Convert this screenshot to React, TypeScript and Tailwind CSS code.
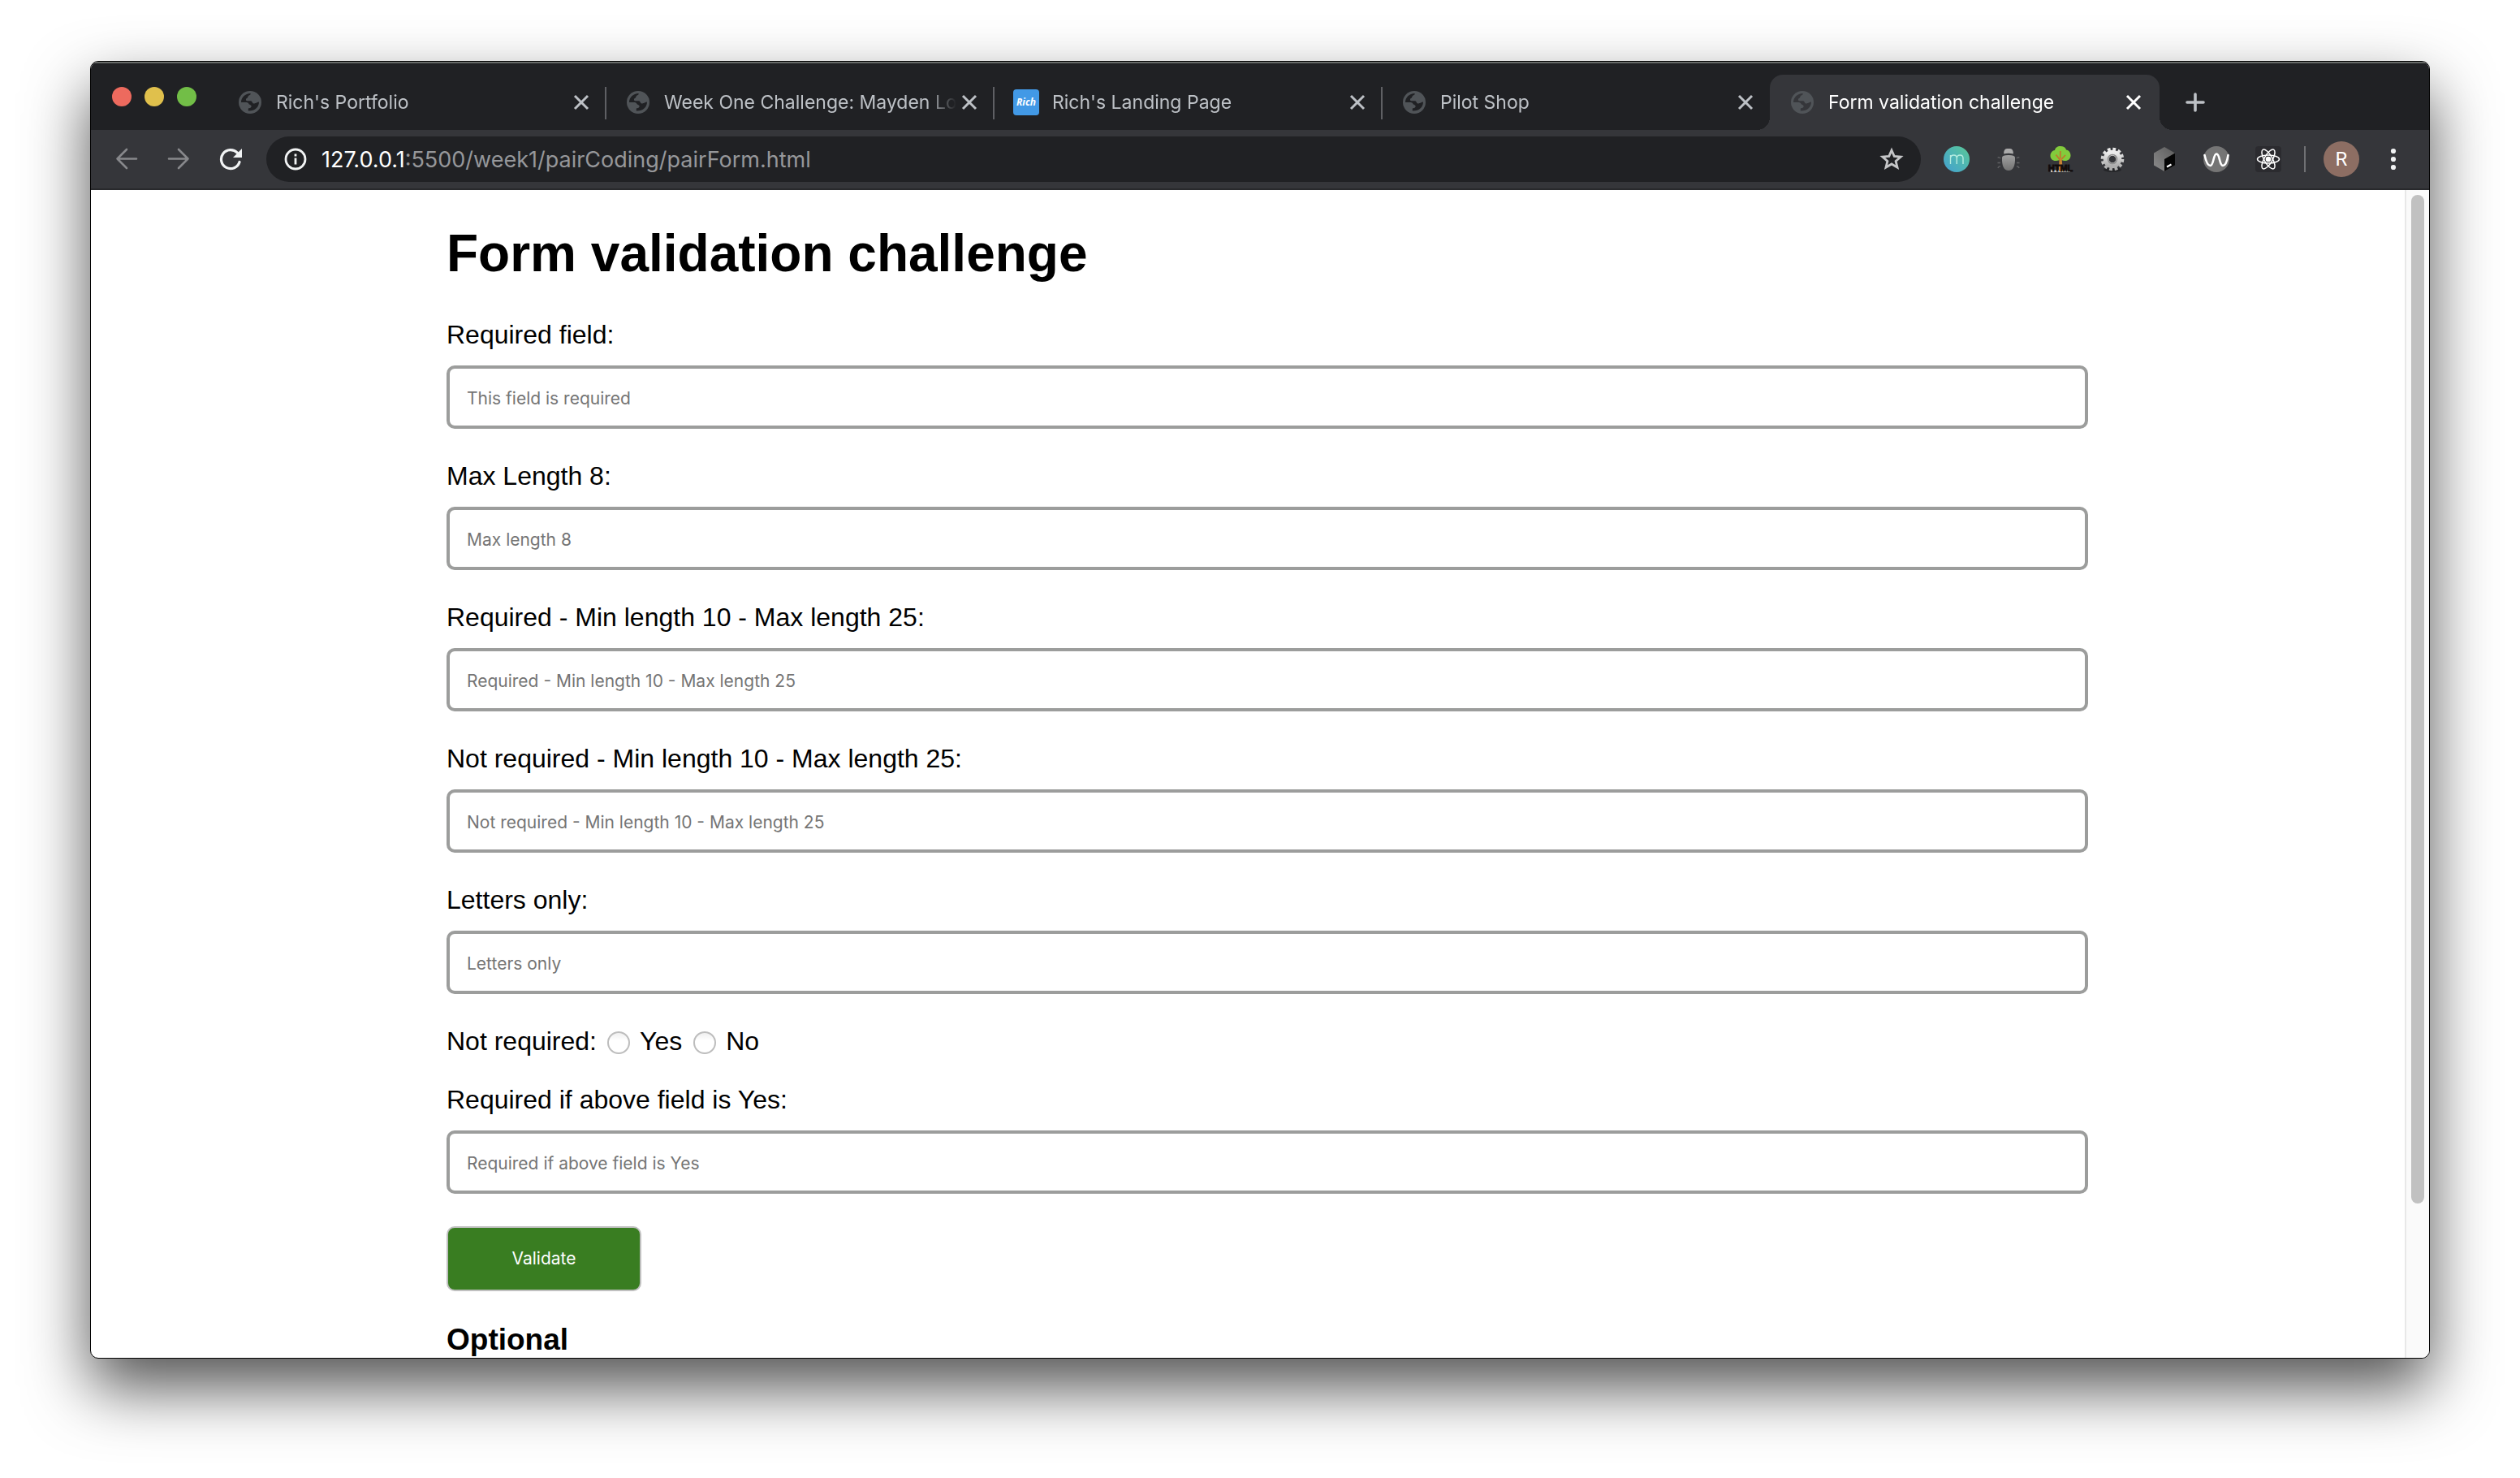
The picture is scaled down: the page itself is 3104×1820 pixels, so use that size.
import React from "react";

function GlobeIcon() {
  return (
    <svg viewBox="0 0 28 28" className="size-7 shrink-0" aria-hidden="true">
      <circle cx="14" cy="14" r="14" fill="#505458" />
      <path
        className="fill-[var(--tab)]"
        d="M3 14C3 8 8 3 14.6 3C14.8 4.400 14.400 5 12.600 5.400C11.400 5.800 11.400 8.800 10 9C8.600 9.200 8.600 12 10 12.200H14.600C16.800 12.200 16.400 14.800 18.400 15.400C21 16 22.600 13.600 25 13.600C25 20 20 25 11.800 24.600V22C12 20.800 15.600 21.600 15.600 18.800C15.600 16.800 13.400 17.400 12.200 15.400C11.200 14 10 14 8.600 14Z"
      />
    </svg>
  );
}

function CloseIcon() {
  return (
    <svg viewBox="0 0 20 20" className="size-5" fill="none" stroke="currentColor" strokeWidth="3" aria-hidden="true">
      <path d="M2 2L18 18M18 2L2 18" />
    </svg>
  );
}

function Tab({ title, active, rich, divider }: { title: string; active?: boolean; rich?: boolean; divider?: boolean }) {
  return (
    <div
      className={
        active
          ? "relative flex h-[68px] w-[480px] min-w-0 items-center rounded-t-2xl bg-[#35363a] pl-[26px] pr-5 text-white [--tab:#35363a]"
          : "relative flex h-[68px] w-[478px] min-w-0 items-center pl-[26px] pr-[18px] text-[#bdc1c6] [--tab:#202124]"
      }
    >
      {active && (
        <>
          <span className="absolute bottom-0 -left-4 size-4 bg-[radial-gradient(circle_at_0_0,#202124_16px,#35363a_16px)]" />
          <span className="absolute bottom-0 -right-4 size-4 bg-[radial-gradient(circle_at_100%_0,#202124_16px,#35363a_16px)]" />
        </>
      )}
      {rich ? (
        <span className="-mx-0.5 flex size-8 shrink-0 items-center justify-center rounded-sm bg-[#4299e6] font-['Open_Sans',sans-serif] text-[12px] font-bold italic text-white">
          Rich
        </span>
      ) : (
        <GlobeIcon />
      )}
      <span className="ml-[18px] min-w-0 flex-1 overflow-hidden whitespace-nowrap text-[23px] leading-8 [mask-image:linear-gradient(to_right,black_calc(100%-36px),transparent)]">
        {title}
      </span>
      <button aria-label={`Close ${title}`} className="ml-1 flex size-6 shrink-0 items-center justify-center">
        <CloseIcon />
      </button>
      {divider && <span className="absolute top-[15px] -right-px h-10 w-0.5 bg-[#5f6064]" />}
    </div>
  );
}

function Extensions() {
  return (
    <div className="ml-7 flex items-center gap-8">
      <button aria-label="m" className="flex size-8 items-center justify-center rounded-full bg-linear-to-tr from-[#459fd0] to-[#5bc895]">
        <svg viewBox="0 0 32 32" className="size-8" fill="none" stroke="#b5ece0" strokeWidth="1.4">
          <path d="M8.5 22V11M8.5 14.5Q9 11 12.5 11Q16.300 11 16.300 15V22M16.300 15Q16.300 11 20.300 11Q24 11 24 15V22" />
        </svg>
      </button>
      <button aria-label="Bug" className="size-8">
        <svg viewBox="0 0 32 32" className="size-8">
          <defs>
            <linearGradient id="bug" x1="0" y1="0" x2="0" y2="1">
              <stop offset="0" stopColor="#a0a0a0" />
              <stop offset="1" stopColor="#737373" />
            </linearGradient>
          </defs>
          <path d="M10.200 9.500Q10 3 14 3H18Q22 3 21.800 9.500Q16 8 10.200 9.500Z" fill="#ababab" />
          <path d="M8 14Q8 11 16 11Q24 11 24 14Q24.500 29.800 16 30Q7.500 29.800 8 14Z" fill="url(#bug)" />
          <g fill="none" stroke="#606164" strokeWidth="1.4">
            <path d="M6 15Q3.500 12.500 3 14.500M26 15Q28.500 12.500 29 14.500M6 20.500H2.500M26 20.500H29.500M6 25Q3.500 24.500 3 27M26 25Q28.500 24.500 29 27" />
          </g>
        </svg>
      </button>
      <button aria-label="HTML tree" className="size-8">
        <svg viewBox="0 0 32 32" className="size-8">
          <rect x="4" y="29.500" width="24" height="2.500" fill="#c9c9c9" />
          <path d="M16 0C20 0 22.500 2 23 4.500C26.500 5 28.500 8 28.500 11.500C28.500 15.500 25 18.500 21 18L16 17L11 18C6.500 18.500 3.500 15.500 3.500 12C3.500 8.500 5.500 5.500 9 5C9.500 2 12 0 16 0Z" fill="#82cb3c" />
          <path d="M14.800 31L15.400 17L10.500 10.500M15.800 16V6M16.400 17L22 11" stroke="#bd7a2c" strokeWidth="1.8" fill="none" />
          <path d="M14 31L15 15H17.500L19 31Z" fill="#c98332" />
          <text x="16" y="31" textAnchor="middle" fontSize="11" fontWeight="700" fontFamily="Liberation Sans" fill="#120b0b" stroke="#120b0b" strokeWidth="0.8">
            HTML
          </text>
        </svg>
      </button>
      <button aria-label="Settings gear" className="size-8">
        <svg viewBox="0 0 32 32" className="size-8">
          <defs>
            <linearGradient id="gear" x1="0" y1="0" x2="0" y2="1">
              <stop offset="0" stopColor="#ececec" />
              <stop offset="1" stopColor="#adadad" />
            </linearGradient>
          </defs>
          <ellipse cx="16" cy="29" rx="11" ry="3" fill="#242528" />
          <circle cx="16" cy="16" r="12.300" fill="none" stroke="url(#gear)" strokeWidth="4" strokeDasharray="3.700 2.740" />
          <circle cx="16" cy="16" r="7.800" fill="none" stroke="url(#gear)" strokeWidth="7" />
          <circle cx="16" cy="16" r="5.500" fill="none" stroke="#8d8d8d" strokeWidth="1.600" />
        </svg>
      </button>
      <button aria-label="Cube terminal" className="size-8">
        <svg viewBox="0 0 32 32" className="size-8">
          <defs>
            <linearGradient id="cube" x1="0" y1="1" x2="1" y2="0">
              <stop offset="0" stopColor="#8c8c8c" />
              <stop offset="1" stopColor="#5c5c5c" />
            </linearGradient>
          </defs>
          <path d="M16 1L29 8.500V23.500L16 31L3 23.500V8.500Z" fill="url(#cube)" />
          <path d="M16 16L29 8.500V23.500L16 31Z" fill="#050505" />
          <path d="M19 25.500L24.500 22.500" stroke="white" strokeWidth="2.200" />
        </svg>
      </button>
      <button aria-label="Wave" className="size-8">
        <svg viewBox="0 0 32 32" className="size-8">
          <circle cx="16" cy="16" r="16" fill="#757575" />
          <path d="M1.500 11C3.500 20 5.500 24 8.500 24C13 24 12 9.500 16.200 9.500C20.500 9.500 19.500 24 24 24C27 24 29 20 30.500 11" fill="none" stroke="white" strokeWidth="2.600" strokeLinecap="round" />
        </svg>
      </button>
      <button aria-label="React" className="size-8 rounded-sm bg-[#2b2b2f]">
        <svg viewBox="0 0 32 32" className="size-8" fill="none" stroke="white" strokeWidth="1.500">
          <ellipse cx="16" cy="16" rx="13.500" ry="5" />
          <ellipse cx="16" cy="16" rx="13.500" ry="5" transform="rotate(60 16 16)" />
          <ellipse cx="16" cy="16" rx="13.500" ry="5" transform="rotate(120 16 16)" />
          <circle cx="16" cy="16" r="2.600" fill="white" />
        </svg>
      </button>
    </div>
  );
}

function Toolbar() {
  return (
    <div className="flex h-[74px] shrink-0 items-center border-b-2 border-[#28292c] bg-[#35363a] pr-8 pl-[30px]">
      <div className="flex items-center gap-9">
        <button aria-label="Back" className="size-7 text-[#87888b]">
          <svg viewBox="0 0 28 28" className="size-7" fill="none" stroke="currentColor" strokeWidth="2.600" strokeLinecap="round" strokeLinejoin="round">
            <path d="M26 13.500H2.500M14 2L2.500 13.500L14 25" />
          </svg>
        </button>
        <button aria-label="Forward" className="size-7 text-[#87888b]">
          <svg viewBox="0 0 28 28" className="size-7" fill="none" stroke="currentColor" strokeWidth="2.600" strokeLinecap="round" strokeLinejoin="round">
            <path d="M2 13.500H25.500M14 2L25.500 13.500L14 25" />
          </svg>
        </button>
        <button aria-label="Reload" className="size-7 text-[#f1f3f4]">
          <svg viewBox="0 0 28 28" className="size-7" fill="none" stroke="currentColor" strokeWidth="3.200">
            <path d="M22.300 6.200A11.500 11.500 0 1 0 25 17.500" strokeLinecap="round" />
            <path d="M28 1V12H17Z" fill="currentColor" stroke="none" />
          </svg>
        </button>
      </div>
      <div className="ml-[30px] flex h-14 min-w-0 flex-1 items-center rounded-full bg-[#202124] pr-5 pl-[22px]">
        <button aria-label="Site information" className="size-7 shrink-0">
          <svg viewBox="0 0 28 28" className="size-7" fill="none" stroke="#f1f3f4" strokeWidth="2.800">
            <circle cx="14" cy="14" r="12" />
            <path d="M14 12.500V20.500M14 7.500V10.500" />
          </svg>
        </button>
        <a href="#page" className="ml-[18px] min-w-0 flex-1 truncate pt-0.5 text-[27px] leading-9 text-[#96979a]">
          <span className="text-white">127.0.0.1</span>:5500/week1/pairCoding/pairForm.html
        </a>
        <button aria-label="Bookmark this page" className="size-8 shrink-0">
          <svg viewBox="0 0 32 32" className="size-8" fill="none" stroke="#c5c6c8" strokeWidth="2.800" strokeLinejoin="miter">
            <path d="M16 5L19.200 12.400L27.200 13.100L21.100 18.400L23 26.200L16 22L9 26.200L10.900 18.400L4.800 13.100L12.800 12.400Z" />
          </svg>
        </button>
      </div>
      <Extensions />
      <span className="ml-7 h-8 w-0.5 bg-[#707174]" />
      <button aria-label="Profile" className="ml-[22px] flex size-11 items-center justify-center rounded-full bg-[#8d6e63] font-['Roboto',sans-serif] text-[24px] text-white">
        R
      </button>
      <button aria-label="Menu" className="ml-[30px] size-6">
        <svg viewBox="0 0 24 24" className="size-6 overflow-visible" fill="#f1f3f4">
          <circle cx="12" cy="2" r="3.100" />
          <circle cx="12" cy="12" r="3.100" />
          <circle cx="12" cy="22" r="3.100" />
        </svg>
      </button>
    </div>
  );
}

function Field({ id, label, placeholder }: { id: string; label: string; placeholder: string }) {
  return (
    <div className="mb-10">
      <label htmlFor={id} className="block">
        {label}
      </label>
      <input
        id={id}
        type="text"
        placeholder={placeholder}
        className="mt-5 block h-[78px] w-full rounded-[10px] border-4 border-[#9c9d9c] px-[21px] pt-0.5 font-['Inter',sans-serif] text-[21px] leading-7 placeholder:text-[#757575]"
      />
    </div>
  );
}

function Radio({ id, label }: { id: string; label: string }) {
  return (
    <>
      <input
        id={id}
        type="radio"
        name="choice"
        className="mt-1 size-7 appearance-none rounded-full border-2 border-[#bdbdbd] bg-white bg-linear-to-b from-[#f0f0f0] to-white to-40%"
      />
      <label htmlFor={id} className="mr-3.5 ml-3">
        {label}
      </label>
    </>
  );
}

export default function App() {
  return (
    <div className="flex h-screen bg-white px-[111px] pt-[75px] pb-[147px] font-['Inter',sans-serif]">
      <div className="flex min-w-0 flex-1 flex-col overflow-hidden rounded-[10px] border border-black bg-white shadow-[0_36px_78px_rgba(0,0,0,0.68)]">
        <div className="flex h-[84px] shrink-0 items-end border-t-2 border-[#686b69] bg-[#202124]">
          <div className="mr-[26px] flex h-full items-center gap-4 pl-[26px]">
            <button aria-label="Close window" className="size-6 rounded-full bg-[#ed6a5e]" />
            <button aria-label="Minimize window" className="size-6 rounded-full bg-[#e0c04c]" />
            <button aria-label="Zoom window" className="size-6 rounded-full bg-[#72be47]" />
          </div>
          <Tab title="Rich's Portfolio" divider />
          <Tab title="Week One Challenge: Mayden Lo" divider />
          <Tab title="Rich's Landing Page" rich divider />
          <Tab title="Pilot Shop" />
          <Tab title="Form validation challenge" active />
          <button aria-label="New tab" className="mb-[22px] ml-8 size-6 shrink-0">
            <svg viewBox="0 0 24 24" className="size-6" fill="none" stroke="#bdc1c6" strokeWidth="3.600" strokeLinecap="round">
              <path d="M12 2V22M2 12H22" />
            </svg>
          </button>
        </div>
        <Toolbar />
        <div id="page" className="flex min-h-0 flex-1">
          <main className="min-w-0 flex-1 overflow-hidden pt-[42px] pr-[390px] pl-[438px] font-['Liberation_Sans',Arial,sans-serif] text-[32px] leading-9 text-black">
            <h1 className="mb-[46px] text-[64px] leading-[72px] font-bold">Form validation challenge</h1>
            <form onSubmit={(e) => e.preventDefault()}>
              <Field id="required" label="Required field:" placeholder="This field is required" />
              <Field id="max8" label="Max Length 8:" placeholder="Max length 8" />
              <Field id="req1025" label="Required - Min length 10 - Max length 25:" placeholder="Required - Min length 10 - Max length 25" />
              <Field id="opt1025" label="Not required - Min length 10 - Max length 25:" placeholder="Not required - Min length 10 - Max length 25" />
              <Field id="letters" label="Letters only:" placeholder="Letters only" />
              <div role="radiogroup" aria-labelledby="choice-label" className="mb-9 flex items-center">
                <span id="choice-label" className="mr-[13px]">
                  Not required:
                </span>
                <Radio id="yes" label="Yes" />
                <Radio id="no" label="No" />
              </div>
              <Field id="conditional" label="Required if above field is Yes:" placeholder="Required if above field is Yes" />
              <button type="submit" className="block h-20 w-[240px] rounded-[10px] border-2 border-[#c0c0c0] bg-[#397d21] font-['Inter',sans-serif] text-[21px] leading-7 text-white">
                Validate
              </button>
            </form>
            <h3 className="mt-[39px] text-[37px] leading-[42px] font-bold">Optional</h3>
          </main>
          <div className="flex w-[30px] shrink-0 border-l-2 border-[#e8e8e8] bg-[#fafafa] pt-1.5 pb-[190px] pl-1.5">
            <div className="w-4 rounded-full bg-[#c1c1c1]" />
          </div>
        </div>
      </div>
    </div>
  );
}
